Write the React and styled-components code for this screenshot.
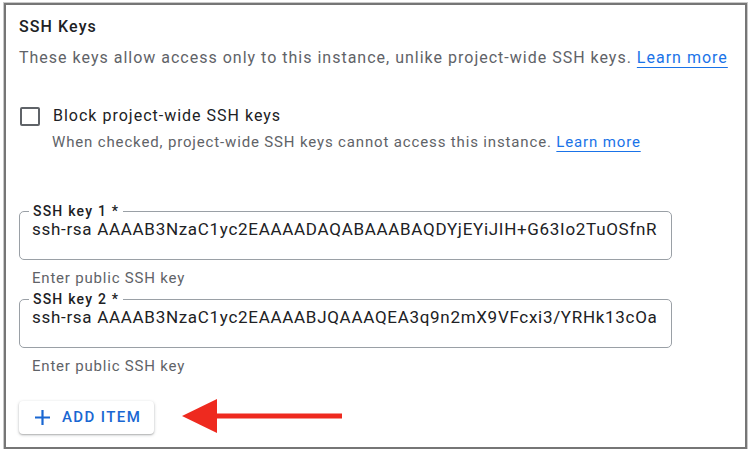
import React from "react";
import styled, { createGlobalStyle } from "styled-components";

const GlobalStyle = createGlobalStyle`
  html, body {
    margin: 0;
    padding: 0;
    background: #ffffff;
  }
  body {
    font-family: Roboto, "Liberation Sans", Arial, sans-serif;
    color: #202124;
  }
`;

const Frame = styled.div`
  box-sizing: border-box;
  width: 743px;
  height: 446px;
  margin: 3px 0 0 4px;
  border: 2px solid #767676;
  box-shadow: 0 0 0 1px #c9c9c9;
  padding: 10px 13px 0;
  background: #fff;
  display: flex;
  flex-direction: column;
`;

const Title = styled.h2`
  margin: 0;
  font-size: 16px;
  font-weight: 500;
  letter-spacing: 1.1px;
  line-height: 24px;
  color: #202124;
`;

const Description = styled.p`
  margin: 7px 0 0;
  font-size: 16px;
  letter-spacing: 1px;
  line-height: 24px;
  color: #5f6368;
  white-space: nowrap;
`;

const Link = styled.a`
  color: #1a73e8;
  text-decoration: underline;
  text-underline-offset: 4px;
  text-decoration-thickness: 1px;
  cursor: pointer;
`;

const CheckRow = styled.label`
  margin-top: 34px;
  display: flex;
  align-items: center;
  gap: 13px;
  font-size: 16px;
  letter-spacing: 1px;
  line-height: 24px;
  color: #202124;
`;

const Box = styled.span`
  box-sizing: border-box;
  width: 20px;
  height: 19px;
  margin-left: 1px;
  border: 2px solid #5f6368;
  border-radius: 2px;
`;

const CheckHint = styled.div`
  margin: 4px 0 0 33px;
  font-size: 15px;
  letter-spacing: 0.85px;
  line-height: 20px;
  color: #5f6368;
  white-space: nowrap;
`;

const Fields = styled.div`
  margin-top: 59px;
  display: flex;
  flex-direction: column;
  gap: 11px;
`;

const Field = styled.div`
  display: flex;
  flex-direction: column;
`;

const Outline = styled.div`
  position: relative;
  box-sizing: border-box;
  width: 653px;
  height: 49px;
  border: 1px solid #9aa0a6;
  border-radius: 5px;
`;

const FloatLabel = styled.span`
  position: absolute;
  left: 9px;
  top: -9px;
  padding: 0 4px;
  background: #fff;
  font-size: 14px;
  font-weight: 500;
  letter-spacing: 1.2px;
  line-height: 16px;
  color: #202124;
`;

const Input = styled.input`
  box-sizing: border-box;
  width: 100%;
  height: 100%;
  border: none;
  outline: none;
  background: transparent;
  padding: 5px 13px 18px 12px;
  font-family: Roboto, "Liberation Sans", Arial, sans-serif;
  font-size: 17px;
  letter-spacing: 0.7px;
  line-height: 24px;
  color: #202124;
`;

const Helper = styled.div`
  margin: 8px 0 0 13px;
  font-size: 15px;
  letter-spacing: 0.8px;
  line-height: 20px;
  color: #5f6368;
`;

const Actions = styled.div`
  margin-top: 23px;
  display: flex;
  align-items: center;
  gap: 28px;
`;

const AddButton = styled.button`
  box-sizing: border-box;
  width: 135px;
  height: 33px;
  display: flex;
  align-items: center;
  gap: 11px;
  padding: 0 0 0 15px;
  border: none;
  border-radius: 4px;
  background: #fff;
  box-shadow: 0 1px 3px rgba(60, 64, 67, 0.35), 0 1px 1px rgba(60, 64, 67, 0.15);
  font-family: Roboto, "Liberation Sans", Arial, sans-serif;
  font-size: 15px;
  font-weight: 500;
  letter-spacing: 1.4px;
  color: #1967d2;
  cursor: pointer;
`;

const keys = [
  {
    label: "SSH key 1 *",
    value: "ssh-rsa AAAAB3NzaC1yc2EAAAADAQABAAABAQDYjEYiJIH+G63Io2TuOSfnR",
  },
  {
    label: "SSH key 2 *",
    value: "ssh-rsa AAAAB3NzaC1yc2EAAAABJQAAAQEA3q9n2mX9VFcxi3/YRHk13cOa",
  },
];

export default function App() {
  return (
    <>
      <GlobalStyle />
      <Frame>
        <Title>SSH Keys</Title>
        <Description>
          These keys allow access only to this instance, unlike project-wide SSH keys.{" "}
          <Link>Learn more</Link>
        </Description>

        <CheckRow>
          <Box />
          Block project-wide SSH keys
        </CheckRow>
        <CheckHint>
          When checked, project-wide SSH keys cannot access this instance.{" "}
          <Link>Learn more</Link>
        </CheckHint>

        <Fields>
          {keys.map((k) => (
            <Field key={k.label}>
              <Outline>
                <FloatLabel>{k.label}</FloatLabel>
                <Input defaultValue={k.value} readOnly />
              </Outline>
              <Helper>Enter public SSH key</Helper>
            </Field>
          ))}
        </Fields>

        <Actions>
          <AddButton>
            <svg width="17" height="17" viewBox="0 0 17 17">
              <path d="M8.5 1v15M1 8.5h15" stroke="#1967d2" strokeWidth="2.2" />
            </svg>
            ADD ITEM
          </AddButton>
          <svg width="162" height="36" viewBox="0 0 162 36">
            <polygon points="0,17 35,0 35,34" fill="#ee2a1f" />
            <rect x="34" y="14.5" width="126" height="5" fill="#ee2a1f" />
          </svg>
        </Actions>
      </Frame>
    </>
  );
}
